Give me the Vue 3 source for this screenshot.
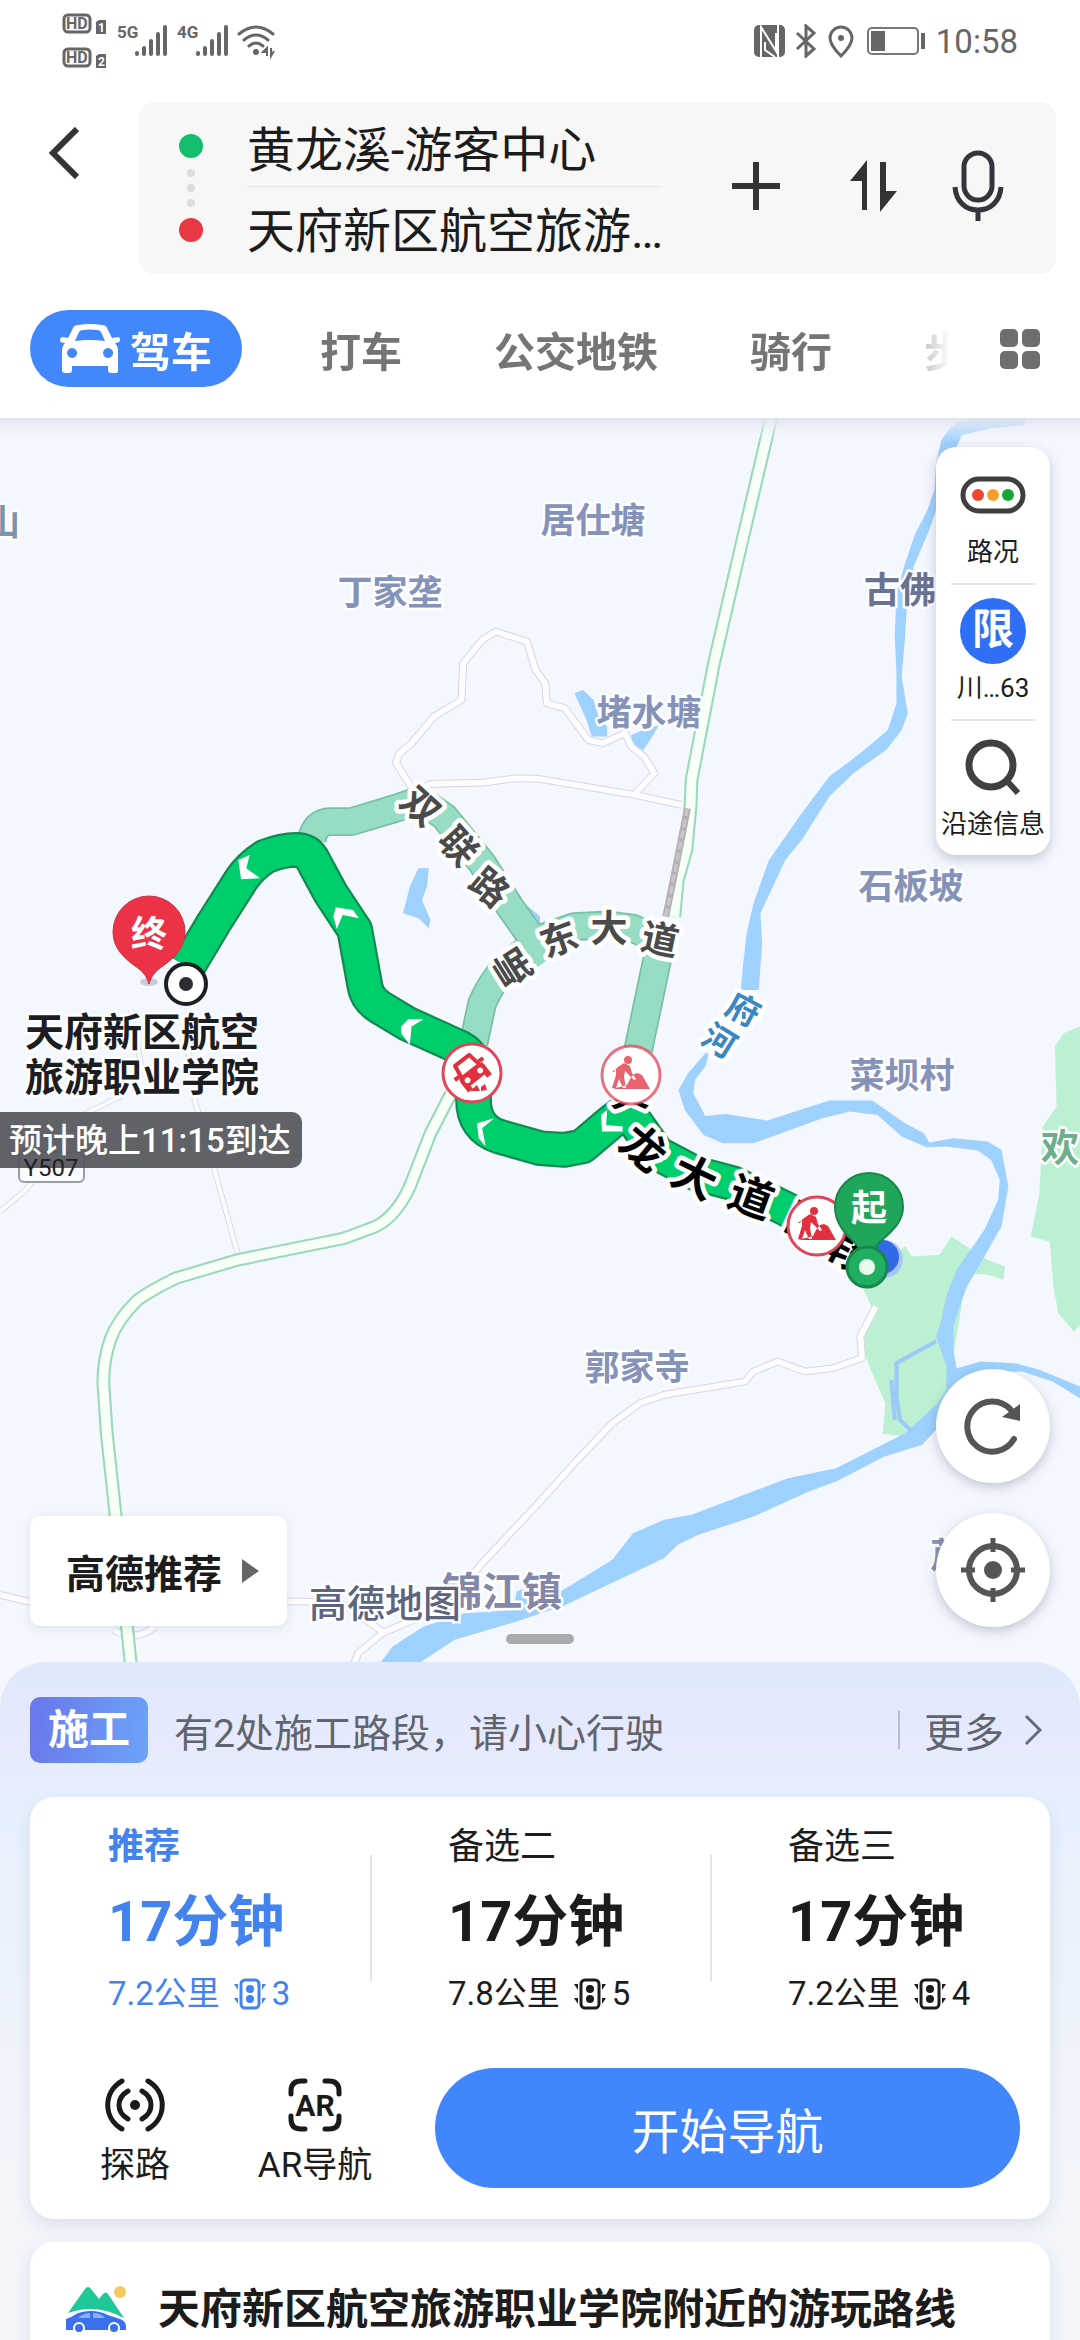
<template>
  <div class="page">
    <header class="header">
      <div class="status-bar">
        <div class="status-group">
          <svg class="status-left" viewBox="0 0 216 56" aria-hidden="true">
            <g fill="none" stroke="#666" stroke-width="3">
              <rect x="2" y="2" width="26" height="17" rx="4" />
              <rect x="2" y="36" width="26" height="17" rx="4" />
            </g>
            <path d="M34 9l3-2h7v14H34zM34 43l3-2h7v14H34z" fill="#666" />
            <g class="status-text">
              <text x="4" y="16" font-size="16">HD</text>
              <text x="4" y="50" font-size="16">HD</text>
              <text x="36" y="19" font-size="12" class="inverse">1</text>
              <text x="36" y="53" font-size="12" class="inverse">2</text>
              <text x="55" y="25" font-size="17">5G</text>
              <text x="115" y="25" font-size="17">4G</text>
            </g>
            <g stroke="#666" stroke-width="4" stroke-linecap="round">
              <path d="M75 40v1M82 35v6M89 28v13M96 21v20M103 14v27" />
              <path d="M136 40v1M143 35v6M150 28v13M157 21v20M164 14v27" />
            </g>
            <g fill="none" stroke="#666" stroke-width="3" stroke-linecap="round">
              <path d="M177 21q17-14 34 0M182 27q12-10 24 0M187 33q7-6 14 0" />
            </g>
            <circle cx="194" cy="39" r="3" fill="#666" />
            <path d="M205 43v-8l-4 4h4M209 35v8l3-5" fill="none" stroke="#666" stroke-width="2" />
          </svg>
        </div>
        <div class="status-group">
          <svg class="status-right" viewBox="0 0 172 34" aria-hidden="true">
            <rect x="0" y="1" width="31" height="32" rx="5" fill="#666" />
            <path d="M7 33V3l15 24V9M11 18v8l10 7M24 1v32" fill="none" stroke="#fff" stroke-width="2" />
            <path d="M43 9l17 16-8 7V2l8 7-17 16" fill="none" stroke="#666" stroke-width="3" />
            <path d="M87 32q-11-11-11-18a11 11 0 0 1 22 0q0 7-11 18z" fill="none" stroke="#666" stroke-width="3" />
            <circle cx="87" cy="14" r="3" fill="#666" />
            <rect x="114" y="4" width="50" height="26" rx="4" fill="none" stroke="#777" stroke-width="2" />
            <path d="M117 7h14v20h-14zM167 9h4v16h-4z" fill="#666" />
          </svg>
          <span class="clock">10:58</span>
        </div>
      </div>

      <div class="search-row">
        <button class="icon-button back" aria-label="返回">
          <svg viewBox="0 0 30 52" width="30" height="52"><path d="M28 2L4 26l24 24" fill="none" stroke="#333" stroke-width="6" /></svg>
        </button>
        <div class="search-box">
          <div class="dots">
            <i class="dot start"></i>
            <i class="dot small"></i>
            <i class="dot small"></i>
            <i class="dot small"></i>
            <i class="dot end"></i>
          </div>
          <div class="places">
            <button class="place">黄龙溪-游客中心</button>
            <button class="place">天府新区航空旅游…</button>
          </div>
          <button class="icon-button add" aria-label="添加途经点">
            <svg viewBox="0 0 48 48" width="48" height="48"><path d="M24 0v48M0 24h48" stroke="#333" stroke-width="6" /></svg>
          </button>
          <button class="icon-button" aria-label="交换起终点">
            <svg viewBox="0 0 48 52" width="48" height="52"><path d="M17 0v50h-5V21H0zM30 2h6v29h11L30 52z" fill="#333" /></svg>
          </button>
          <button class="icon-button" aria-label="语音输入">
            <svg viewBox="0 0 52 72" width="52" height="72" fill="none" stroke="#34343c" stroke-width="5">
              <rect x="12" y="3" width="28" height="47" rx="14" />
              <path d="M3 37c1 15 11 23 23 23s22-8 23-23M26 60v11" />
            </svg>
          </button>
        </div>
      </div>

      <nav class="tabs">
        <div class="tab-list">
          <button class="tab active">
            <svg viewBox="0 0 60 50" width="60" height="50">
              <path fill="#fff" fill-rule="evenodd" d="M8 14L13 4q1-3 5-3 12-2 24 0 4 0 5 3l5 10 6-1q2 0 2 3t-5 3q3 3 3 8v20q0 2-3 2h-4q-3 0-3-3v-4H12v4q0 3-3 3H5q-3 0-3-3V27q0-5 3-8-5 0-5-3t3-3zM15 17q15-2 30 0l-4-9q-1-2-4-2-7-1-14 0-3 0-4 2zM12 24a5 5 0 1 0 .1 0zM48 24a5 5 0 1 0 .1 0z" />
            </svg>
            驾车
          </button>
          <button v-for="tab in tabs" :key="tab" class="tab">{{ tab }}</button>
        </div>
        <button class="icon-button" aria-label="全部出行方式">
          <svg viewBox="0 0 40 40" width="40" height="40" fill="#6e6e6e">
            <rect width="18" height="18" rx="5" /><rect x="22" width="18" height="18" rx="5" />
            <rect y="22" width="18" height="18" rx="5" /><rect x="22" y="22" width="18" height="18" rx="5" />
          </svg>
        </button>
      </nav>
    </header>

    <main class="map">
      <svg class="map-canvas" viewBox="0 418 1080 1286" preserveAspectRatio="xMidYMin slice">
        <defs>
          <linearGradient id="topShade" x1="0" y1="0" x2="0" y2="1">
            <stop offset="0" stop-color="#dfe3ee" />
            <stop offset="1" stop-color="#f5f7ff" stop-opacity="0" />
          </linearGradient>
          <g id="construction">
            <circle r="29" fill="none" stroke="#e2455a" stroke-width="3" />
            <path d="M-19 14h38L11 0 7-2 3-1l-4 5-3 6zM-13-8l6-4 6 3 2 7 4 6-2 1-6-6-3-3-1 6 2 11h-3l-4-9-3 9h-4l4-13v-7l-2 4h-2z" fill="#e2303f" />
            <circle cx="-3" cy="-15" r="4" fill="#e2303f" />
          </g>
        </defs>
        <rect y="418" width="1080" height="1286" fill="#f5f7ff" />

        <!-- terrain, water and roads -->
        <g transform="scale(.3444 .3333)" stroke-linejoin="round">
          <g fill="#bcf0d2">
            <path d="M3136 3080l-48 20-25 40 5 180-40 60-10 200-25 130 55 15 10 130 15 85 45 55 18-20z" />
            <path d="M2508 3870l70-90 50-40 20 30 80-5 35-55 45 30 60 40 50 20-5 40-45-15-60-5-60 370-35 50-85 70-65-8 8-92-43-100-30-90 45-70z" />
          </g>
          <g fill="#9ed1fe">
            <path d="M2983 1250L2808 1250 2758 1285 2733 1320 2718 1390 2713 1470 2693 1530 2658 1600 2628 1690 2603 1780 2598 1910 2603 2020 2603 2110 2578 2190 2498 2260 2408 2330 2328 2440 2233 2580 2188 2710 2168 2800 2158 2890 2151 2970 2203 2970 2213 2830 2208 2740 2280 2580 2328 2520 2408 2390 2478 2320 2573 2250 2618 2190 2636 2140 2618 2030 2628 1910 2633 1820 2653 1700 2698 1590 2728 1500 2748 1410 2778 1340 2793 1305 2878 1285 2973 1275z" />
            <path d="M2048 3160L1998 3220 1970 3270 1988 3330 2043 3405 2098 3430 2188 3430 2268 3400 2388 3355 2468 3335 2548 3345 2618 3410 2690 3442 2748 3440 2838 3452 2878 3480 2903 3540 2898 3600 2858 3690 2778 3810 2750 3880 2733 3960 2718 4010 2748 4100 2748 4170 2723 4210 2628 4300 2428 4405 2288 4435 2008 4545 1928 4560 1838 4600 1778 4680 1628 4775 1500 4830 1350 4840 1230 4880 1140 4940 1100 4995 1040 5112 1160 5112 1210 4995 1320 4920 1500 4865 1643 4815 1928 4675 1968 4635 2028 4605 2188 4550 2348 4475 2428 4445 2568 4370 2678 4335 2718 4290 2775 4150 2838 4115 2968 4115 3056 4145 3136 4195 3136 4160 3018 4110 2948 4090 2848 4085 2778 4105 2768 4050 2768 3980 2793 3900 2808 3860 2908 3680 2928 3560 2908 3450 2868 3425 2768 3415 2698 3428 2683 3400 2628 3370 2533 3302 2408 3302 2228 3362 2108 3342 2048 3348 2013 3280 2018 3240 2048 3200 2058 3160z" />
            <path d="M1668 2080l25-10 30 30 15 50 25 30v30h-45l-15-50zM1833 2205l35-15 45-15-25 45-20 30-32-15zM1215 2605l30 0-5 55-15 40 25 60-5 25-30-30-45-15 20-80zM1500 2690l68 60v30l-38-40zM1490 4830l10-55 50-20 18 40z" />
            <path d="M2718 4025l-90 50-25 15v100l10 70 35 35M2588 4140l10 120" fill="none" stroke="#9bcaf8" stroke-width="12" />
          </g>

          <g fill="none">
            <path v-for="(d, i) in lanes" :key="'lc' + i" :d="d" stroke="#d8d6e2" stroke-width="23" />
            <path v-for="(d, i) in lanes" :key="'lf' + i" :d="d" stroke="#fdfdff" stroke-width="17" />
            <path v-for="(d, i) in paths" :key="'pc' + i" :d="d" stroke="#d8d8de" stroke-width="17" />
            <path v-for="(d, i) in paths" :key="'pf' + i" :d="d" stroke="#fafbff" stroke-width="12" />
            <path v-for="(d, i) in highways" :key="'hc' + i" :d="d" stroke="#96dab8" stroke-width="40" />
            <path v-for="(d, i) in highways" :key="'hf' + i" :d="d" stroke="#f7fff6" stroke-width="28" />
            <path d="M1996 2425l-41 215-22 110" stroke="#b3afb4" stroke-width="20" />
            <path d="M1996 2425l-41 215-22 110" stroke="#c9c6ca" stroke-width="10" stroke-dasharray="24 10" />

            <path v-for="(d, i) in altRoutes" :key="'ac' + i" :d="d" stroke="#79bfa6" stroke-width="86" />
            <path v-for="(d, i) in altRoutes" :key="'af' + i" :d="d" stroke="#96ddc3" stroke-width="76" />
            <path :d="mainRoute" stroke="#108a50" stroke-width="107" />
            <path :d="mainRoute" stroke="#00ce6c" stroke-width="94" />
          </g>
          <g fill="#fff">
            <path d="M692 2580l33-15-10 40 40 30-55 3zM968 2750l7-28 50 8 17 25-47-10-17 42zM1165 3080l20-22h45l-35 22-5 55-25-35zM1385 3370l50-15-35 30 10 55-20-25zM1745 3345l18-15-3 45 48 5v15h-60z" />
          </g>
        </g>

        <g class="map-label">
          <text
            v-for="label in labels"
            :key="label.text"
            :x="label.x"
            :y="label.y"
            :font-size="label.size || 35"
            :fill="label.color || '#8592ba'"
            :text-anchor="label.anchor || 'middle'"
          >{{ label.text }}</text>
        </g>
        <g class="road-label">
          <text
            v-for="(g, i) in roadGlyphs"
            :key="i"
            :font-size="g.size"
            :fill="g.color"
            :transform="`translate(${g.x} ${g.y}) rotate(${g.turn})`"
          >{{ g.text }}</text>
        </g>

        <!-- route events -->
        <g transform="translate(472 1073)">
          <circle r="29" fill="#fff" stroke="#e2455a" stroke-width="3" />
          <g transform="rotate(-38)" fill="#e2303f">
            <path d="M-11-3l2-13H9l2 13" fill="none" stroke="#e2303f" stroke-width="4" stroke-linejoin="round" />
            <path fill-rule="evenodd" d="M-13-3h-5v-4h6zM13-3h5v-4h-6zM-13-4h26q2 2 2 5v12H9V9H-9v4h-6V1q0-3 2-5zM-8 0a3 3 0 1 0 .1 0zM8 0a3 3 0 1 0 .1 0z" />
          </g>
          <path d="M-2 18l7-6 3 6zM9 18v-4l4-3 2 6z" fill="#e2303f" />
        </g>
        <circle cx="631" cy="1075" r="29" fill="#fff" />
        <use href="#construction" transform="translate(631 1075)" opacity=".75" />
        <circle cx="817" cy="1226" r="29" fill="#fff" />
        <use href="#construction" transform="translate(817 1226)" />

        <circle cx="884" cy="1259" r="19" fill="#a9c5f8" />
        <circle cx="882" cy="1257" r="17" fill="#3269e8" />
        <path d="M869 1173a34 34 0 0 1 34 34c0 17-15 27-24 36l-12 14-12-14c-9-9-20-19-20-36a34 34 0 0 1 34-34z" fill="#20a65b" stroke="#16884a" stroke-width="2" />
        <circle cx="867" cy="1267" r="20" fill="#20ae62" stroke="#16884a" stroke-width="3" />
        <circle cx="867" cy="1267" r="8" fill="#e9fbea" />
        <text class="pin-text" x="869" y="1221">起</text>

        <ellipse cx="149" cy="982" rx="9" ry="4" fill="#c9ccd6" />
        <path d="M149 896a36 36 0 0 1 36 36c0 16-11 26-22 34-8 5-12 11-14 18-2-7-6-13-14-18-11-8-22-18-22-34a36 36 0 0 1 36-36z" fill="#ed3247" stroke="#c93345" stroke-width="1" />
        <text class="pin-text" x="149" y="947">终</text>
        <circle cx="186" cy="984" r="20" fill="#fff" stroke="#1d1f22" stroke-width="4" />
        <circle cx="186" cy="984" r="7" fill="#2b2d31" />

        <g class="destination">
          <text x="142" y="1046">天府新区航空</text>
          <text x="142" y="1091">旅游职业学院</text>
        </g>
        <rect x="19" y="1152" width="65" height="30" rx="5" fill="#fbfcff" stroke="#9b9da6" stroke-width="2" />
        <rect x="-12" y="1112" width="314" height="56" rx="10" fill="#55565c" fill-opacity=".93" />
        <text class="eta" x="9" y="1152">预计晚上11:15到达</text>
        <text class="road-no" x="51" y="1176">Y507</text>

        <rect y="418" width="1080" height="24" fill="url(#topShade)" />
      </svg>

      <aside class="tools">
        <button class="tool">
          <svg viewBox="0 0 66 66" width="66" height="66">
            <rect x="3" y="17" width="60" height="32" rx="16" fill="#fff" stroke="#3f3f3f" stroke-width="5" />
            <circle cx="18" cy="33" r="6" fill="#f24632" /><circle cx="33" cy="33" r="6" fill="#f8a02b" /><circle cx="48" cy="33" r="6" fill="#12a834" />
          </svg>
          <span>路况</span>
        </button>
        <button class="tool">
          <b class="limit">限</b>
          <span>川…63</span>
        </button>
        <button class="tool">
          <svg viewBox="0 0 66 66" width="66" height="66" fill="none" stroke="#404040">
            <circle cx="31" cy="31" r="22" stroke-width="7" /><path d="M47 47l11 12" stroke-width="6" />
          </svg>
          <span>沿途信息</span>
        </button>
      </aside>

      <div class="round-buttons">
        <button class="round" aria-label="刷新路线">
          <svg viewBox="0 0 60 60" width="60" height="60">
            <path d="M51 43A25 25 0 1 1 48 14" fill="none" stroke="#555" stroke-width="6" stroke-linecap="round" />
            <path d="M57 8v17l-18-4z" fill="#555" />
          </svg>
        </button>
        <button class="round" aria-label="定位">
          <svg viewBox="0 0 64 64" width="64" height="64" fill="none" stroke="#555">
            <circle cx="32" cy="32" r="24" stroke-width="6" />
            <path d="M32 0v14M32 50v14M0 32h14M50 32h14" stroke-width="5" />
            <circle cx="32" cy="32" r="9" fill="#555" stroke="none" />
          </svg>
        </button>
      </div>

      <div class="map-footer">
        <button class="prefer">高德推荐
          <svg viewBox="0 0 17 24" width="17" height="24"><path d="M0 0l17 12L0 24z" fill="#666" /></svg>
        </button>
        <span class="brand">高德地图</span>
      </div>
      <i class="handle"></i>
    </main>

    <section class="sheet">
      <div class="notice">
        <b class="badge">施工</b>
        <span class="notice-text">有2处施工路段，请小心行驶</span>
        <a class="more" href="#">更多
          <svg viewBox="0 0 18 32" width="18" height="32"><path d="M2 2l14 14L2 30" fill="none" stroke="#666b78" stroke-width="3" /></svg>
        </a>
      </div>

      <div class="card">
        <div class="options">
          <button v-for="(o, i) in options" :key="o.name" class="option" :class="{ selected: i === 0 }">
            <span class="option-name">{{ o.name }}</span>
            <span class="option-time">17分钟</span>
            <span class="option-info">{{ o.distance }}公里
              <svg viewBox="0 0 32 32" width="32" height="32">
                <rect x="7" y="2" width="18" height="28" rx="4" fill="none" stroke="currentColor" stroke-width="3" />
                <circle cx="16" cy="11" r="4" fill="currentColor" /><circle cx="16" cy="21" r="4" fill="currentColor" />
                <path d="M0 6h4v6zM0 20h4v6zM32 6h-4v6zM32 20h-4v6z" fill="currentColor" />
              </svg>{{ o.lights }}
            </span>
          </button>
        </div>
        <div class="actions">
          <button class="action">
            <svg viewBox="0 0 62 54" width="62" height="54" fill="none" stroke="#1a1a1a" stroke-width="5" stroke-linecap="round">
              <path d="M18 3C-1 14-1 40 18 51M44 3c19 11 19 37 0 48M24 13c-12 7-12 21 0 28M38 13c12 7 12 21 0 28" />
              <circle cx="31" cy="27" r="5" fill="#1a1a1a" stroke="none" />
            </svg>
            <span>探路</span>
          </button>
          <button class="action">
            <svg viewBox="0 0 54 54" width="54" height="54" fill="none" stroke="#1a1a1a" stroke-width="5" stroke-linecap="round">
              <path d="M3 16v-3Q3 3 13 3h4M37 3h4q10 0 10 10v3M51 38v3q0 10-10 10h-4M17 51h-4Q3 51 3 41v-3" />
              <text class="ar" x="27" y="38">AR</text>
            </svg>
            <span>AR导航</span>
          </button>
          <button class="go">开始导航</button>
        </div>
      </div>

      <a class="card nearby" href="#">
        <svg viewBox="0 0 60 48" width="60" height="48">
          <circle cx="54" cy="6" r="6" fill="#f8c860" />
          <path d="M2 27L19 3q3-4 6 0l8 10 4-5q3-3 5 0l16 24Q30 17 2 27z" fill="#1fc896" />
          <path d="M0 33q6-2 12-6 16-5 30 2l12 4q6 2 6 8v3H0z" fill="#3c6ef0" />
          <path d="M13 31q6-4 11-4v5H13zM27 27q8 0 12 5H27z" fill="#8fb0fa" />
          <g fill="#3c6ef0" stroke="#fff" stroke-width="2"><circle cx="13" cy="42" r="5" /><circle cx="48" cy="42" r="5" /></g>
        </svg>
        <span>天府新区航空旅游职业学院附近的游玩路线</span>
      </a>
    </section>
  </div>
</template>

<script setup>
const tabs = ['打车', '公交地铁', '骑行', '步行']

const options = [
  { name: '推荐', distance: '7.2', lights: 3 },
  { name: '备选二', distance: '7.8', lights: 5 },
  { name: '备选三', distance: '7.2', lights: 4 },
]

// 地图道路
const lanes = [
  'M1200 2370L1150 2290 1160 2260 1195 2230 1260 2150 1340 2100 1345 1990 1400 1920 1440 1895 1530 1925 1555 2010 1583 2050 1588 2110 1640 2125 1708 2220 1750 2230 1815 2200 1833 2240 1870 2270 1900 2320 1845 2380',
  'M1220 2370L1250 2352 1400 2348 1500 2335 1568 2337 1845 2385 1980 2415',
  'M2543 3920L2498 4010 2503 4075 2418 4105 2338 4115 2258 4085 2188 4115 2163 4145 1928 4185 1858 4210 1778 4270 1668 4390 1568 4505 1400 4690 1330 4780M1200 4860L1110 4900 1040 4960 1010 5040',
  'M0 4785L80 4805 890 4805 1000 4815 1110 4895M330 4890Q390 4930 450 4880',
]
const paths = [
  'M540 3100L565 3300 620 3500 690 3760',
  'M380 3030L410 3200 350 3290 250 3340 75 3570 0 3635',
]
const highways = [
  'M2240 1250L2158 1610 2073 1990 2008 2340 2005 2420 1993 2550 1968 2640 1958 2750',
  'M1310 3280L1250 3400 1190 3560Q1150 3650 1090 3680L1000 3715 690 3780 510 3835Q440 3870 400 3900 340 3960 320 4020 300 4080 300 4150L310 4300 335 4540 380 4995 392 5112',
]
const altRoutes = [
  'M905 2520Q915 2465 960 2465L1020 2465 1150 2425 1220 2400 1290 2450 1400 2590 1480 2720 1590 2880',
  'M1375 3130L1400 3010Q1430 2940 1470 2900L1568 2815 1668 2780 1768 2775 1838 2785 1908 2820 1908 2880 1853 3150',
]
const mainRoute =
  'M545 2900L620 2770 700 2640Q725 2600 770 2570 820 2550 860 2550 890 2550 905 2575L960 2680 1030 2790 1060 2960Q1065 2995 1100 3020L1180 3070 1330 3140Q1370 3160 1375 3200L1375 3300Q1375 3385 1450 3410L1568 3445 1638 3450 1690 3440 1770 3370 1820 3330 1908 3460 2018 3520 2128 3550 2288 3630 2468 3750 2518 3800'

const labels = [
  { text: '山', x: 20, y: 535, anchor: 'end', color: '#7d94b0' },
  { text: '居仕塘', x: 593, y: 533 },
  { text: '丁家垄', x: 390, y: 605 },
  { text: '堵水塘', x: 649, y: 725 },
  { text: '古佛', x: 864, y: 603, size: 36, anchor: 'start', color: '#6b7392' },
  { text: '石板坡', x: 911, y: 899 },
  { text: '菜坝村', x: 902, y: 1088 },
  { text: '郭家寺', x: 637, y: 1380 },
  { text: '欢', x: 1041, y: 1161, size: 38, anchor: 'start', color: '#6cae8e' },
  { text: '锦江镇', x: 442, y: 1606, size: 40, anchor: 'start', color: '#8388a8' },
  { text: '芦', x: 930, y: 1568, anchor: 'start' },
]

const glyph = (text, x, y, turn, size = 37, color = '#4a4a4a') => ({ text, x, y, turn, size, color })
const roadGlyphs = [
  glyph('双', 420, 807, 42),
  glyph('联', 458, 847, 48),
  glyph('路', 489, 888, 40),
  glyph('岷', 513, 969, -32),
  glyph('东', 559, 940, -20),
  glyph('大', 609, 929, 0),
  glyph('道', 660, 940, 12),
  glyph('府', 743, 1010, 28, 33, '#3b87c2'),
  glyph('河', 719, 1041, 32, 33, '#3b87c2'),
  glyph('黄', 630, 1090, 0, 42, '#000'),
  glyph('龙', 643, 1149, 40, 44, '#000'),
  glyph('大', 694, 1178, 26, 44, '#000'),
  glyph('道', 751, 1198, 20, 44, '#000'),
  glyph('四', 808, 1224, 25, 44, '#000'),
  glyph('段', 852, 1253, 28, 44, '#000'),
]
</script>

<style>
body {
  margin: 0;
  background: #fff;
}
</style>

<style scoped>
.page {
  display: flex;
  flex-direction: column;
  height: 100vh;
  overflow: hidden;
  background: #fff;
  color: #1c1c1c;
  font-family: Roboto, "Noto Sans CJK SC", sans-serif;
}

button {
  margin: 0;
  padding: 0;
  border: none;
  background: none;
  color: inherit;
  font: inherit;
  cursor: pointer;
}

a {
  color: inherit;
  text-decoration: none;
}

svg {
  display: block;
  flex: none;
}

.icon-button {
  display: flex;
  align-items: center;
  justify-content: center;
}

/* 顶部 */
.header {
  flex: none;
}

.status-bar {
  display: flex;
  justify-content: space-between;
  align-items: center;
  height: 82px;
  padding: 0 62px;
}

.status-group {
  display: flex;
  align-items: center;
  gap: 10px;
}

.status-left {
  width: 216px;
  height: 56px;
}

.status-right {
  width: 172px;
  height: 34px;
}

.status-text {
  fill: #666;
  font-weight: 700;
}

.status-text .inverse {
  fill: #fff;
}

.clock {
  color: #666;
  font-size: 33px;
}

.search-row {
  display: flex;
  gap: 60px;
  margin-top: 20px;
  padding: 0 24px 0 49px;
}

.back {
  align-self: flex-start;
  margin-top: 25px;
}

.search-box {
  flex: 1;
  display: flex;
  align-items: center;
  gap: 54px;
  min-width: 0;
  padding: 3px 52px 7px 40px;
  border-radius: 16px;
  background: #f7f7f7;
}

.add {
  width: 80px;
}

.dots {
  display: flex;
  flex-direction: column;
  align-items: center;
  gap: 7px;
  margin-right: -10px;
  padding-top: 4px;
}

.dot {
  width: 24px;
  height: 24px;
  border-radius: 50%;
}

.dot.start {
  margin-bottom: 4px;
  background: #12bd6c;
}

.dot.end {
  margin-top: 4px;
  background: #ea3842;
}

.dot.small {
  width: 8px;
  height: 8px;
  background: #dcdcdc;
}

.places {
  flex: 1;
  min-width: 0;
}

.place {
  display: block;
  width: 100%;
  height: 81px;
  font-size: 48px;
  text-align: left;
  white-space: nowrap;
}

.place + .place {
  border-top: 1px solid #e6e6e6;
}

.tabs {
  display: flex;
  align-items: center;
  justify-content: space-between;
  gap: 50px;
  padding: 36px 40px 31px 30px;
}

.tab-list {
  flex: 1;
  display: flex;
  align-items: center;
  min-width: 0;
  overflow: hidden;
  mask-image: linear-gradient(to right, #000 93%, transparent);
}

.tab {
  flex: none;
  padding: 0 46px;
  color: #757575;
  font-size: 41px;
  font-weight: 700;
}

.tab.active {
  display: flex;
  align-items: center;
  gap: 10px;
  height: 77px;
  margin-right: 32px;
  padding: 0 30px;
  border-radius: 39px;
  background: #4287fb;
  color: #fff;
}

/* 地图 */
.map {
  position: relative;
  flex: 1;
  min-height: 0;
  overflow: hidden;
  background: #f5f7ff;
}

.map-canvas {
  position: absolute;
  inset: 0;
  width: 100%;
  height: 100%;
}

.map-label text,
.road-label text,
.destination text {
  font-weight: 700;
  stroke: #fff;
  stroke-width: 5px;
  stroke-linejoin: round;
  paint-order: stroke;
}

.road-label text {
  text-anchor: middle;
  dominant-baseline: central;
  stroke-width: 9px;
}

.destination text {
  fill: #1b1d22;
  font-size: 39px;
  text-anchor: middle;
}

.pin-text {
  fill: #fff;
  font-size: 36px;
  font-weight: 700;
  text-anchor: middle;
}

.eta {
  fill: #fff;
  font-size: 33px;
  font-weight: 500;
}

.road-no {
  fill: #1f2024;
  font-size: 24px;
  text-anchor: middle;
}

.tools {
  position: absolute;
  top: 29px;
  right: 30px;
  width: 114px;
  border-radius: 20px;
  background: #fff;
  box-shadow: 0 4px 12px rgba(40, 50, 80, 0.25);
}

.tool {
  display: flex;
  flex-direction: column;
  align-items: center;
  gap: 4px;
  width: 100%;
  height: 136px;
  padding-top: 15px;
  font-size: 26px;
  line-height: 40px;
  white-space: nowrap;
}

.tool + .tool {
  background: linear-gradient(#e4e4e4, #e4e4e4) center top / 84px 2px no-repeat;
}

.limit {
  width: 66px;
  height: 66px;
  border-radius: 50%;
  background: #2f6ff5;
  color: #fff;
  font-size: 42px;
  font-weight: 700;
  line-height: 64px;
  text-align: center;
}

.round-buttons {
  position: absolute;
  right: 30px;
  bottom: 75px;
  display: flex;
  flex-direction: column;
  gap: 30px;
}

.round {
  display: flex;
  align-items: center;
  justify-content: center;
  width: 114px;
  height: 114px;
  border-radius: 50%;
  background: #fff;
  box-shadow: 0 4px 12px rgba(40, 50, 80, 0.25);
}

.map-footer {
  position: absolute;
  left: 30px;
  bottom: 76px;
  display: flex;
  align-items: flex-end;
  gap: 22px;
}

.prefer {
  display: flex;
  align-items: center;
  gap: 20px;
  height: 110px;
  padding: 0 28px 0 36px;
  border-radius: 10px;
  background: #fff;
  box-shadow: 0 2px 10px rgba(40, 50, 80, 0.12);
  font-size: 39px;
  font-weight: 700;
}

.brand {
  color: #5d647f;
  font-size: 38px;
  font-weight: 500;
  line-height: 44px;
  -webkit-text-stroke: 5px #fff;
  paint-order: stroke fill;
}

.handle {
  position: absolute;
  bottom: 58px;
  left: 50%;
  width: 68px;
  height: 10px;
  border-radius: 5px;
  background: #a9aaae;
  transform: translateX(-50%);
}

/* 底部面板 */
.sheet {
  position: relative;
  flex: none;
  margin-top: -40px;
  padding: 35px 30px 0;
  border-radius: 46px 46px 0 0;
  background: linear-gradient(#dfe9fb, #e6eafc 80px, #e6f0fd 140px, #f3f5fb 500px);
}

.notice {
  display: flex;
  align-items: center;
  gap: 26px;
  margin-bottom: 34px;
  color: #60646f;
  font-size: 39px;
}

.badge {
  padding: 0 18px;
  border-radius: 10px;
  background: linear-gradient(100deg, #6a77ea, #6ca3f9);
  color: #fff;
  font-size: 41px;
  line-height: 66px;
}

.notice-text {
  flex: 1;
}

.more {
  display: flex;
  align-items: center;
  gap: 20px;
  height: 38px;
  padding: 0 8px 0 24px;
  border-left: 2px solid #b9bccb;
  font-size: 40px;
}

.card {
  display: block;
  border-radius: 24px;
  background: #fff;
  box-shadow: 0 6px 16px rgba(60, 70, 100, 0.12);
}

.options {
  display: grid;
  grid-template-columns: repeat(3, 1fr);
  padding-top: 24px;
}

.option {
  display: flex;
  flex-direction: column;
  padding-left: 78px;
  text-align: left;
  white-space: nowrap;
}

.option + .option {
  background: linear-gradient(#e2e4e8, #e2e4e8) left 34px / 2px 126px no-repeat;
}

.option.selected {
  color: #4482ee;
}

.option-name {
  font-size: 36px;
  line-height: 52px;
}

.selected .option-name {
  font-weight: 700;
}

.option-time {
  font-size: 56px;
  font-weight: 700;
  line-height: 98px;
}

.option-info {
  display: flex;
  align-items: center;
  gap: 6px;
  font-size: 33px;
  line-height: 46px;
}

.option-info svg {
  margin-left: 8px;
}

.actions {
  display: flex;
  align-items: flex-end;
  padding: 51px 30px 31px 15px;
}

.action {
  display: flex;
  flex-direction: column;
  align-items: center;
  gap: 12px;
  width: 180px;
  font-size: 35px;
  line-height: 44px;
}

.ar {
  fill: #1a1a1a;
  stroke: none;
  font-size: 30px;
  font-weight: 700;
  text-anchor: middle;
}

.go {
  flex: 1;
  height: 120px;
  margin-left: 30px;
  border-radius: 60px;
  background: #4286fe;
  color: #fff;
  font-size: 48px;
}

.nearby {
  display: flex;
  align-items: center;
  gap: 32px;
  margin-top: 23px;
  padding: 38px 36px 0;
  border-radius: 24px 24px 0 0;
  font-size: 42px;
  font-weight: 700;
  line-height: 60px;
  white-space: nowrap;
}
</style>
